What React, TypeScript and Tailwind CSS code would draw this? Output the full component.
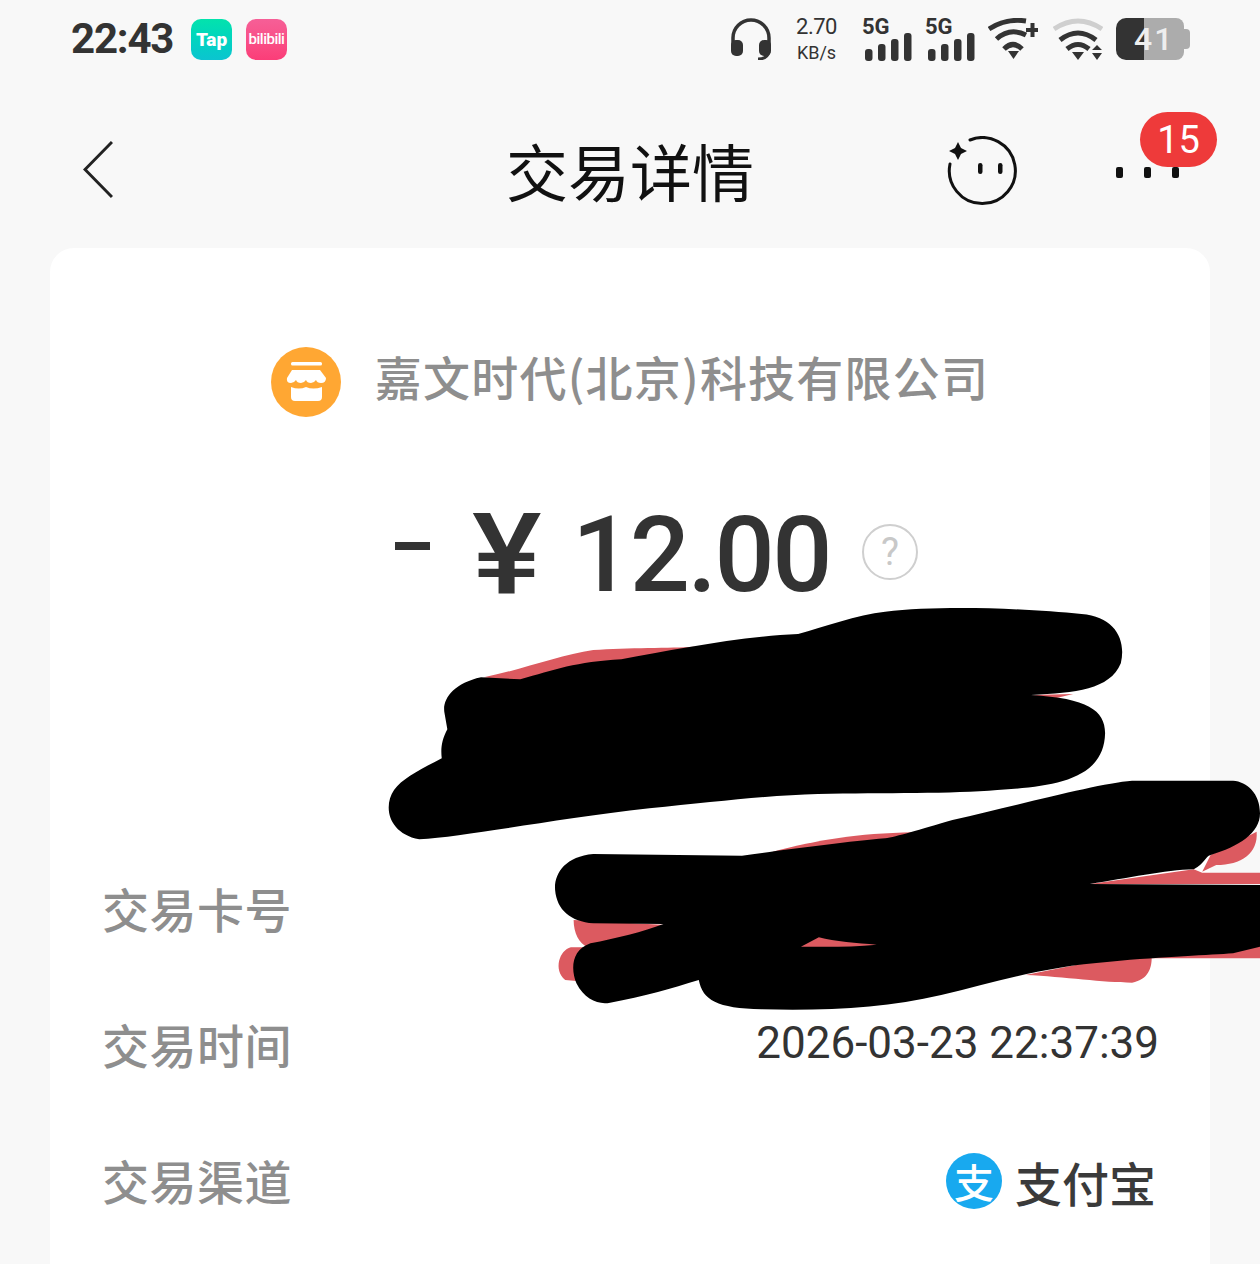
import React from "react";

const CJK = "font-['Noto_Sans_CJK_SC','Noto_Sans',sans-serif]";

function Signal({ label }: { label: string }) {
  return (
    <div className="relative w-[50px] h-[44px]">
      <span className="absolute left-0 top-[-2px] font-['Roboto',sans-serif] font-bold text-[22px] leading-[24px] text-[#333]">{label}</span>
      <svg width="50" height="44" viewBox="0 0 50 44" className="block">
        <rect x="3" y="32" width="7.5" height="12" rx="3" fill="#333" />
        <rect x="16" y="27" width="7.5" height="17" rx="3" fill="#333" />
        <rect x="29" y="22" width="7.5" height="22" rx="3" fill="#333" />
        <rect x="42" y="16" width="7.5" height="28" rx="3" fill="#333" />
      </svg>
    </div>
  );
}

function Scribble() {
  return (
    <svg
      className="absolute left-[380px] top-[600px] pointer-events-none"
      width="880"
      height="420"
      viewBox="0 0 1568 1260"
      preserveAspectRatio="none"
    >
      <g fill="#dc5a60">
        <path d="M185 232 C250 210 320 165 380 150 C440 142 520 145 560 140 L600 200 L240 245 Z" />
        <path d="M1160 285 L1235 282 L1200 296 Z" />
        <path d="M700 755 C780 720 850 700 950 697 L900 740 L720 770 Z" />
        <path d="M345 960 C345 1000 355 1030 370 1042 L340 1042 C320 1050 308 1110 330 1140 L370 1146 L510 975 Z" />
        <path d="M1150 1125 C1220 1130 1290 1148 1340 1148 C1370 1140 1375 1100 1375 1075 L1568 1075 L1568 1030 L1300 1075 Z" />
        <path d="M1265 852 L1450 808 L1465 818 L1568 818 L1568 852 Z" />
        <path d="M1480 765 L1562 695 C1565 760 1535 795 1490 795 L1465 815 Z" />
      </g>
      <g fill="#000">
        <path d="M180 232 C130 250 110 300 115 340 L120 388 C110 420 108 445 110 475 C70 510 40 535 25 570 C5 620 15 700 70 718 C150 710 300 660 480 625 C600 605 700 585 780 582 C900 578 1020 582 1100 570 C1200 560 1290 540 1292 400 C1292 330 1260 295 1160 285 C1240 278 1300 270 1320 190 C1330 120 1310 50 1250 42 C1150 25 1000 15 900 35 C850 45 790 80 745 102 C640 110 520 150 430 178 C350 185 310 210 250 238 Z" />
        <path d="M380 762 C330 770 310 820 312 870 C315 930 340 965 380 970 L505 972 C470 995 420 1015 375 1030 C340 1050 340 1110 350 1150 C365 1200 390 1215 410 1208 C470 1190 520 1165 568 1140 C575 1200 600 1225 680 1228 C800 1232 900 1225 1000 1185 C1100 1145 1180 1100 1300 1085 C1400 1070 1480 1065 1520 1060 L1568 1040 L1568 855 L1265 852 C1330 835 1400 810 1450 808 C1470 790 1470 770 1480 765 C1530 740 1568 700 1568 640 C1568 580 1545 545 1520 542 L1340 542 C1280 550 1150 610 1020 660 C960 690 920 710 900 715 C830 725 720 750 645 767 Z" />
      </g>
      <path d="M750 1040 L782 1012 C810 1025 850 1030 885 1034 C840 1042 790 1040 750 1040 Z" fill="#dc5a60" />
    </svg>
  );
}

function Row({ label, children }: { label: string; children?: React.ReactNode }) {
  return (
    <div className="flex items-center justify-between h-[136px] pl-[52px] pr-[51px]">
      <span className={`${CJK} font-medium text-[47px] leading-none tracking-[0.5px] text-[#8e8e8e] -translate-y-[4px]`}>{label}</span>
      {children}
    </div>
  );
}

export default function App() {
  return (
    <div className="relative w-[1260px] h-[1264px] overflow-hidden bg-[#f8f8f8]">
      {/* status bar */}
      <div className="flex items-center h-[78px] pl-[71px] pr-[70px]">
        <span className="font-['Roboto',sans-serif] font-bold text-[42px] leading-none tracking-[-1.2px] text-[#333] w-[102px] whitespace-nowrap">22:43</span>
        <div className="ml-[18px] w-[41px] h-[41px] rounded-[10px] bg-gradient-to-b from-[#03e3ac] to-[#0cc4d0] flex items-center justify-center">
          <span className="font-['Roboto',sans-serif] font-black text-[19px] leading-none text-white">Tap</span>
        </div>
        <div className="ml-[14px] w-[41px] h-[41px] rounded-[10px] bg-gradient-to-b from-[#f65f97] to-[#fb3d78] flex items-center justify-center">
          <span className="font-['Roboto',sans-serif] font-medium text-[15px] leading-none tracking-[-0.5px] text-white">bilibili</span>
        </div>

        <div className="ml-auto flex items-center">
          <svg width="42" height="42" viewBox="0 0 42 42" className="block">
            <path d="M3 28 V20 a18 18 0 0 1 36 0 V28" fill="none" stroke="#333" strokeWidth="3.5" />
            <rect x="1" y="22" width="12" height="16" rx="5" fill="#333" />
            <rect x="29" y="22" width="12" height="16" rx="5" fill="#333" />
            <path d="M39 34 Q37 41 28 41" fill="none" stroke="#333" strokeWidth="3" />
          </svg>
          <div className="ml-[24px] w-[41px] flex flex-col items-center font-['Roboto',sans-serif] text-[#333]">
            <span className="text-[22px] leading-[22px] tracking-[-0.5px]">2.70</span>
            <span className="mt-[5px] text-[18px] leading-[20px]">KB/s</span>
          </div>
          <div className="ml-[25px]"><Signal label="5G" /></div>
          <div className="ml-[13px]"><Signal label="5G" /></div>
          <svg width="50" height="42" viewBox="0 0 50 42" className="block ml-[13px]">
            <g fill="none" stroke="#333" strokeWidth="5">
              <path d="M1 11 Q18 0 38 3" />
              <path d="M8.5 21 Q22 9 38 17" />
              <path d="M16 31 Q25 22 34 31" />
            </g>
            <path d="M20 33 H31 L25.5 41 Z" fill="#333" />
            <path d="M38 12 H50 M44.5 5 V19" stroke="#333" strokeWidth="4" />
          </svg>
          <svg width="50" height="42" viewBox="0 0 50 42" className="block ml-[15px]">
            <path d="M1 11 Q25 -5 49 11" fill="none" stroke="#cfcfcf" strokeWidth="5" />
            <g fill="none" stroke="#333" strokeWidth="5">
              <path d="M7 22 Q25 8 43 22" />
              <path d="M14 31 Q25 22 36 31" />
            </g>
            <path d="M19 34 H31 L25 42 Z" fill="#333" />
            <path d="M39 32 L44 27 L49 32 Z M39 35 H49 L44 42 Z" fill="#333" />
          </svg>
          <div className="relative ml-[13px] w-[74px] h-[42px] flex items-center">
            <div className="w-[28px] h-full rounded-l-[10px] bg-[#333]" />
            <div className="w-[40px] h-full rounded-r-[8px] bg-[#acacac]" />
            <div className="w-[6px] h-[20px] rounded-r-[4px] bg-[#acacac]" />
            <span className="absolute left-[18px] top-[4px] font-['Roboto',sans-serif] font-medium text-[32px] leading-[34px] tracking-[2px] text-[#eee]">41</span>
          </div>
        </div>
      </div>

      {/* title bar */}
      <div className="grid grid-cols-[1fr_auto_1fr] items-center h-[170px] pt-[18px] pl-[83px] pr-[81px]">
        <div>
          <svg width="30" height="60" viewBox="0 0 30 60" className="block -translate-y-[2px]">
            <path d="M29 2 L2 29.5 L29 57" fill="none" stroke="#222" strokeWidth="3" />
          </svg>
        </div>
        <span className={`${CJK} text-[62px] leading-none text-[#111] -translate-x-[1px] -translate-y-[2px]`}>交易详情</span>
        <div className="flex justify-end items-center">
          <svg width="72" height="72" viewBox="0 0 72 72" className="block">
            <path d="M23 4 A33 33 0 1 1 3 28" fill="none" stroke="#111" strokeWidth="3" strokeLinecap="round" />
            <path d="M11 6 L14 12 L20 15 L14 18 L11 24 L8 18 L2 15 L8 12 Z" fill="#111" />
            <rect x="31" y="27" width="4.5" height="11" rx="2.2" fill="#111" />
            <rect x="51" y="27" width="4.5" height="11" rx="2.2" fill="#111" />
          </svg>
          <div className="relative ml-[97px] flex gap-[21px] items-center h-[12px]">
            <span className="w-[7px] h-[11px] rounded-[2px] bg-[#111]" />
            <span className="w-[7px] h-[11px] rounded-[2px] bg-[#111]" />
            <span className="w-[7px] h-[11px] rounded-[2px] bg-[#111]" />
            <span className="absolute left-[24px] top-[-54px] w-[77px] h-[55px] rounded-full bg-[#ee3a3a] flex items-center justify-center font-['Roboto',sans-serif] text-[38px] leading-none text-white">15</span>
          </div>
        </div>
      </div>

      {/* card */}
      <div className="mx-[50px] h-[1100px] rounded-t-[24px] bg-white pt-[99px]">
        <div className="flex items-center justify-center gap-[34px] pr-[0px]">
          <svg width="70" height="70" viewBox="0 0 70 70" className="block shrink-0">
            <circle cx="35" cy="35" r="35" fill="#ffa733" />
            <rect x="20" y="15" width="31" height="3.5" rx="1.5" fill="#fff" />
            <path d="M21 23 H49 L55 31 Q55 36 50 36 Q46 36 45 33 Q43 36 40 36 Q36 36 35 33 Q33 36 30 36 Q26 36 25 33 Q23 36 20 36 Q15 36 16 31 Z" fill="#fff" />
            <path d="M20 40 Q28 43 35 40 Q42 43 51 40 V50 Q51 54 47 54 H24 Q20 54 20 50 Z" fill="#fff" />
          </svg>
          <span className={`${CJK} font-medium text-[47px] leading-none tracking-[1.2px] text-[#8e8e8e] whitespace-nowrap -translate-y-[7px]`}>嘉文时代(北京)科技有限公司</span>
        </div>

        <div className="mt-[75px] h-[120px] flex items-center pl-[345px] font-['Roboto',sans-serif] text-[#333]">
          <span className="w-[35px] h-[8px] bg-[#333] -translate-y-[6px]" />
          <span className="ml-[42px] font-medium text-[114px] leading-none w-[100px] translate-y-[3px] scale-x-[1.15] origin-left">¥</span>
          <span className="font-medium text-[106px] leading-none tracking-[-2.5px] w-[290px] translate-y-[3px] whitespace-nowrap">12.00</span>
          <div className="w-[56px] h-[56px] rounded-full border-2 border-[#cfcfcf] flex items-center justify-center text-[38px] leading-none text-[#c8c8c8]">?</div>
        </div>

        <div className="mt-[231px]">
          <Row label="交易卡号" />
          <Row label="交易时间">
            <span className="font-['Roboto',sans-serif] text-[44px] leading-none text-[#333] -translate-y-[4px]">2026-03-23 22:37:39</span>
          </Row>
          <Row label="交易渠道">
            <div className="flex items-center gap-[13px] pr-[3px] -translate-y-[2px]">
              <div className="w-[56px] h-[56px] rounded-full bg-[#18a9ef] flex items-center justify-center">
                <span className={`${CJK} font-medium text-[40px] leading-none text-white`}>支</span>
              </div>
              <span className={`${CJK} font-medium text-[47px] leading-none tracking-[0px] text-[#3a3a3a]`}>支付宝</span>
            </div>
          </Row>
        </div>
      </div>

      <Scribble />
    </div>
  );
}
